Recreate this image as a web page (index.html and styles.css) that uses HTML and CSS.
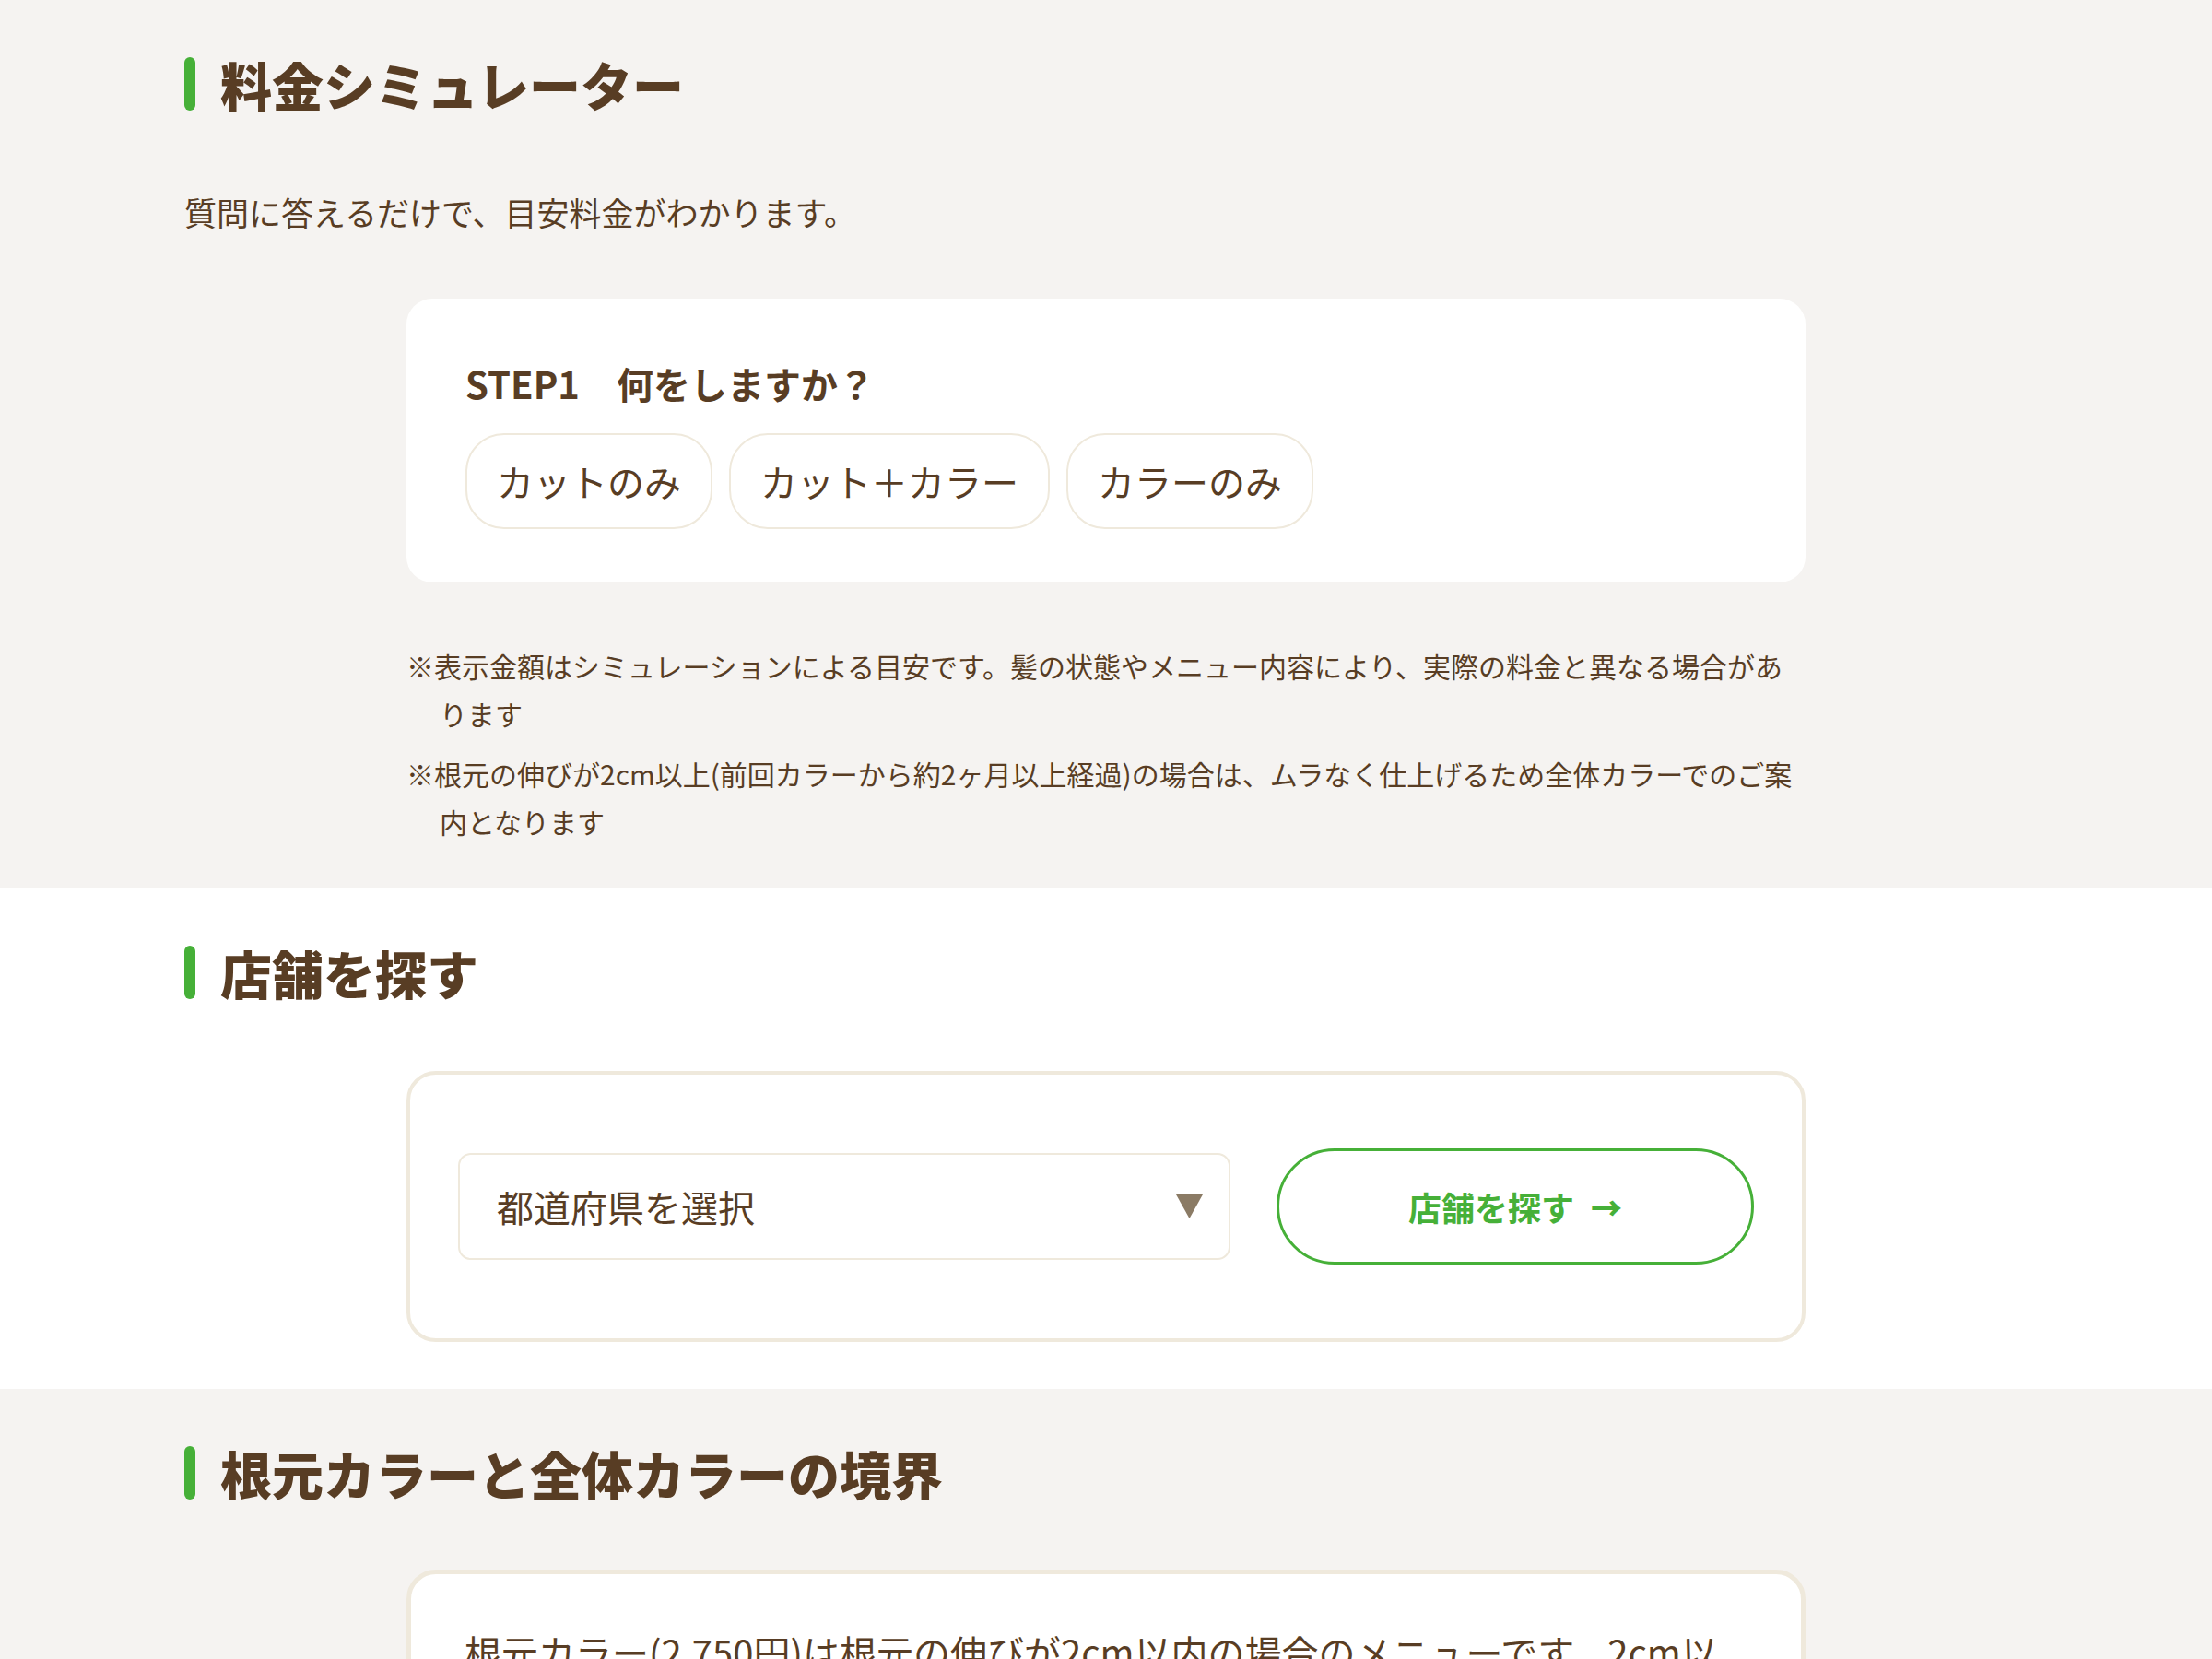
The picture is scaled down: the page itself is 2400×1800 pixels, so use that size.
FILE: index.html
```html
<!DOCTYPE html>
<html lang="ja">
<head>
<meta charset="utf-8">
<title>料金シミュレーター</title>
<link rel="stylesheet" href="styles.css">
</head>
<body>
<section class="sec sec-grey sec-sim">
  <div class="inner">
    <h2 class="heading">料金シミュレーター</h2>
    <p class="lead">質問に答えるだけで、目安料金がわかります。</p>
    <div class="card card-sim">
      <p class="step-title">STEP1　何をしますか？</p>
      <div class="choices">
        <button class="choice" type="button">カットのみ</button>
        <button class="choice" type="button">カット＋カラー</button>
        <button class="choice" type="button">カラーのみ</button>
      </div>
    </div>
    <ul class="notes">
      <li>※表示金額はシミュレーションによる目安です。髪の状態やメニュー内容により、実際の料金と異なる場合があります</li>
      <li>※根元の伸びが2cm以上(前回カラーから約2ヶ月以上経過)の場合は、ムラなく仕上げるため全体カラーでのご案内となります</li>
    </ul>
  </div>
</section>

<section class="sec sec-white sec-shop">
  <div class="inner">
    <h2 class="heading">店舗を探す</h2>
    <div class="card card-line card-shop">
      <div class="select">
        <span class="select-label">都道府県を選択</span>
        <svg class="select-arrow" width="29" height="26" viewBox="0 0 29 26" aria-hidden="true"><polygon points="0,0 29,0 14.5,26" fill="#8b7b65"/></svg>
      </div>
      <button class="btn-search" type="button"><span class="btn-label">店舗を探す</span><span class="btn-arrow">→</span></button>
    </div>
  </div>
</section>

<section class="sec sec-grey sec-border">
  <div class="inner">
    <h2 class="heading">根元カラーと全体カラーの境界</h2>
    <div class="card card-line card-text">
      <p class="body-text">根元カラー(2,750円)は根元の伸びが2cm以内の場合のメニューです。2cm以上伸びている場合は、ムラなく仕上げるため全体カラーをお選びください。</p>
    </div>
  </div>
</section>
</body>
</html>
```

FILE: styles.css
```css
* {
  box-sizing: border-box;
}

html, body {
  margin: 0;
  padding: 0;
}

body {
  font-family: "Noto Sans CJK JP", "Noto Sans", sans-serif;
  color: #583d24;
  background: #f5f3f1;
}

.sec {
  padding: 52px 200px 0;
}

.sec-grey {
  background: #f5f3f1;
}

.sec-white {
  background: #ffffff;
}

.sec-sim {
  padding-bottom: 47px;
}

.sec-shop {
  padding-bottom: 51px;
}

.sec-border {
  padding-bottom: 80px;
}

.heading {
  display: flex;
  align-items: center;
  gap: 27px;
  margin: 0 0 68px;
  font-size: 56px;
  line-height: 78px;
  font-weight: 900;
  color: #583d24;
}

.heading::before {
  content: "";
  flex: 0 0 12px;
  width: 12px;
  height: 58px;
  border-radius: 6px;
  background: #46b038;
}

.sec-border .heading {
  margin-bottom: 66px;
}

.lead {
  margin: 0 0 63px;
  font-size: 35px;
  line-height: 63px;
}

.card {
  max-width: 1518px;
  margin: 0 auto;
  background: #ffffff;
  border-radius: 28px;
}

.card-line {
  border: 4px solid #efe9dc;
  border-radius: 32px;
}

.card-sim {
  padding: 64px 64px 58px;
}

.step-title {
  margin: 0 0 26px;
  font-size: 40px;
  line-height: 56px;
  font-weight: 700;
}

.choices {
  display: flex;
  gap: 18px;
}

.choice {
  font-family: inherit;
  font-size: 40px;
  line-height: 60px;
  color: #583d24;
  background: #ffffff;
  border: 2px solid #efe9dc;
  border-radius: 42px;
  padding: 20px 32px;
  margin: 0;
  cursor: pointer;
}

.notes {
  list-style: none;
  max-width: 1518px;
  margin: 64px auto 0;
  padding: 0;
}

.notes li {
  font-size: 30px;
  line-height: 52px;
  padding-left: 36px;
  text-indent: -36px;
}

.notes li + li {
  margin-top: 13px;
}

.card-shop {
  display: flex;
  align-items: center;
  gap: 50px;
  padding: 80px 52px;
}

.select {
  flex: 1 1 auto;
  display: flex;
  align-items: center;
  justify-content: space-between;
  height: 116px;
  padding: 0 28px 0 40px;
  border: 2px solid #efe9dc;
  border-radius: 14px;
  background: #ffffff;
}

.select-label {
  font-size: 40px;
  line-height: 56px;
}

.select-arrow {
  display: block;
}

.btn-search {
  flex: 0 0 518px;
  display: flex;
  align-items: center;
  justify-content: center;
  gap: 18px;
  width: 518px;
  height: 126px;
  font-family: inherit;
  font-size: 36px;
  font-weight: 700;
  color: #46b038;
  background: #ffffff;
  border: 3px solid #46b038;
  border-radius: 63px;
  margin: 0;
  padding: 0;
  cursor: pointer;
}

.btn-arrow {
  font-size: 34px;
  font-weight: 900;
}

.card-text {
  padding: 48px 58px;
  border-width: 5px;
}

.body-text {
  margin: 0;
  font-size: 40px;
  line-height: 72px;
}
```
